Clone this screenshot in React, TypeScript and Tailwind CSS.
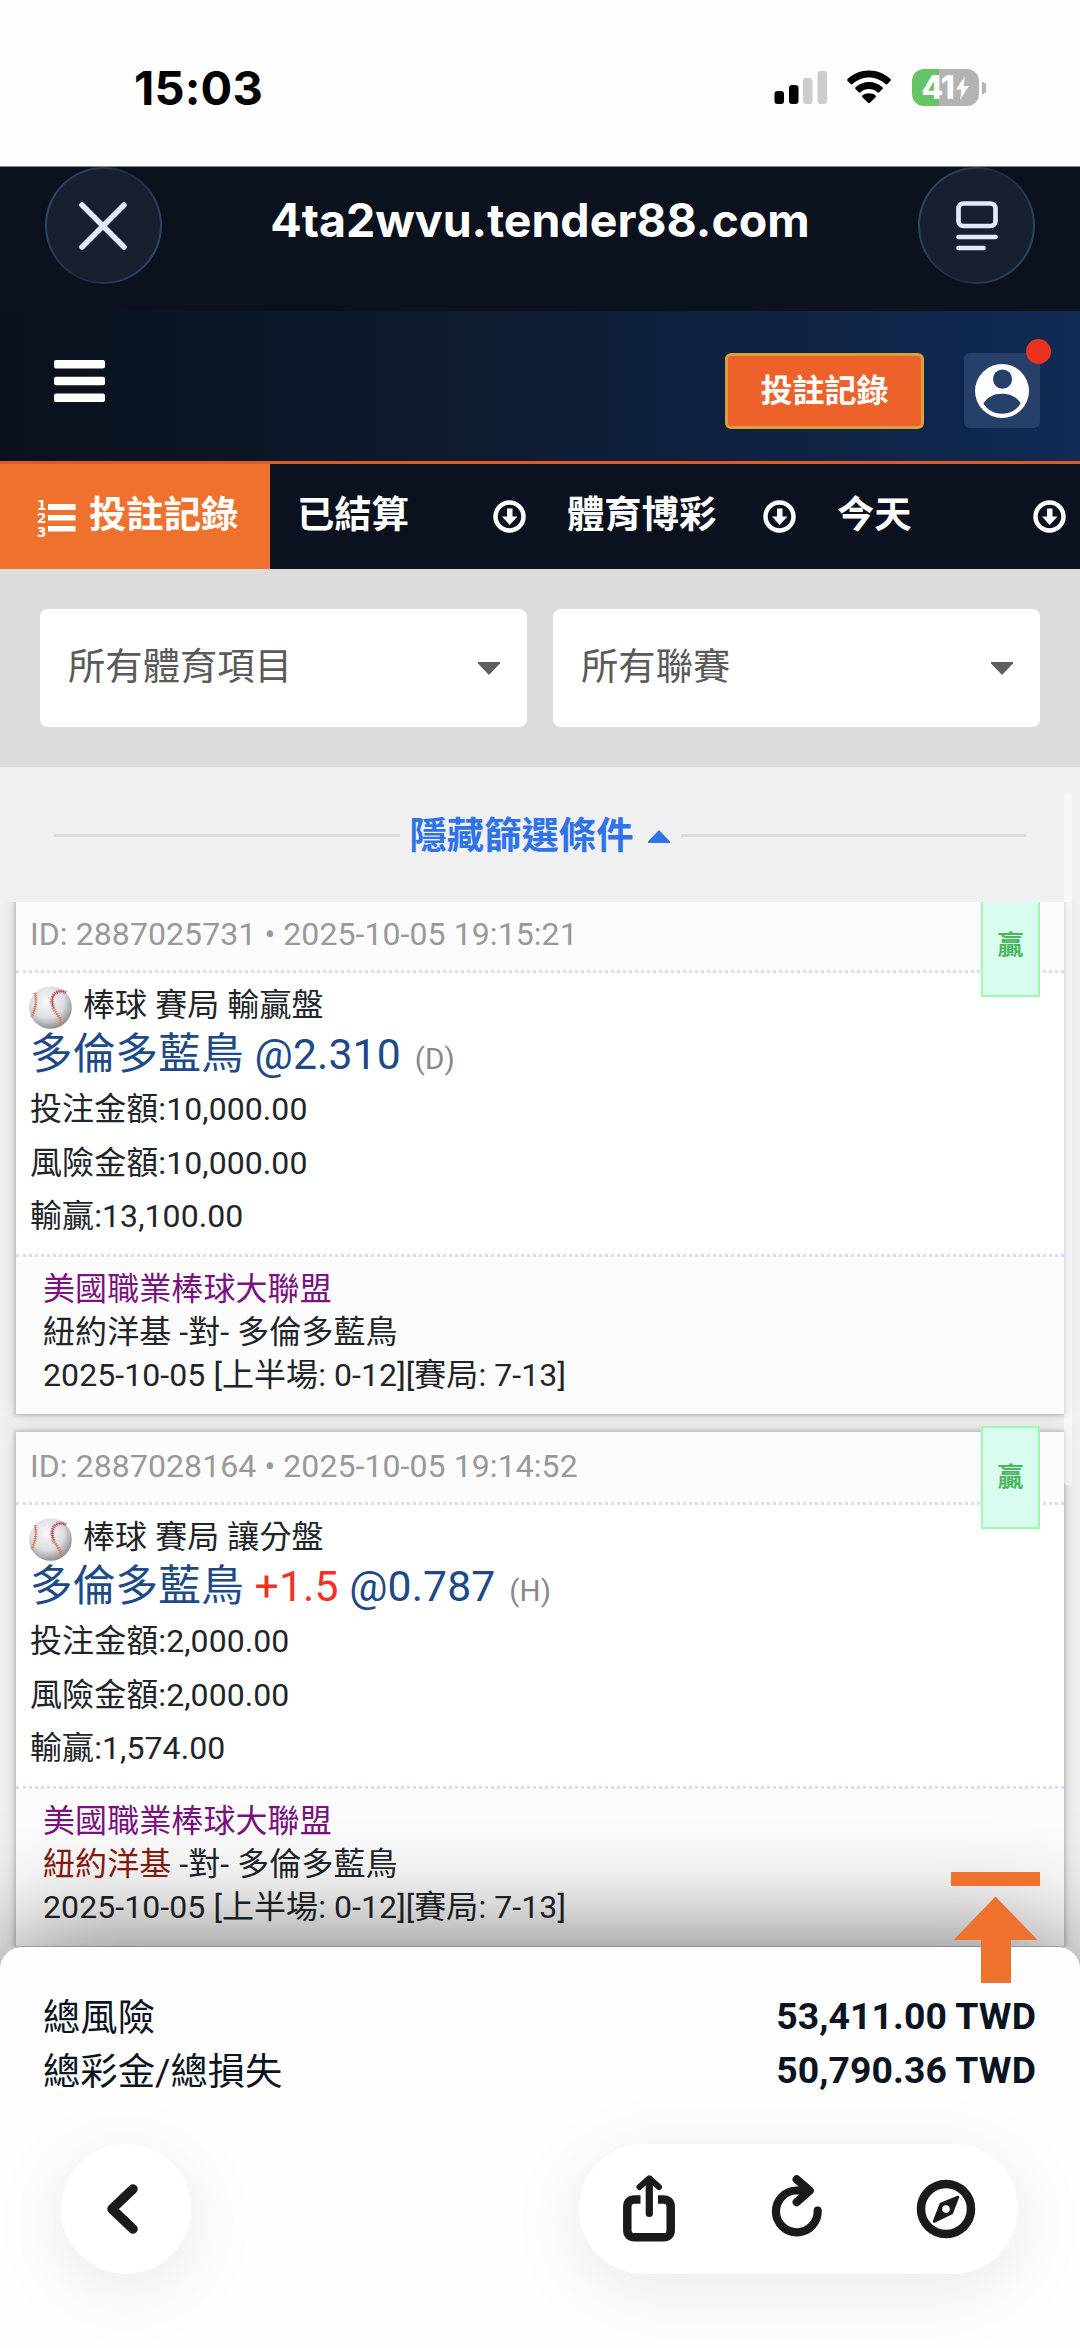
import React from 'react';

const FONT = "font-['Roboto','Noto_Sans_CJK_TC',sans-serif]";

interface Bet {
  id: string;
  time: string;
  market: string;
  pick: string;
  handicap?: string;
  odds: string;
  oddsType: string;
  stake: string;
  risk: string;
  result: string;
  homeFavored?: boolean;
}

const bets: Bet[] = [
  {
    id: '2887025731', time: '2025-10-05 19:15:21', market: '棒球 賽局 輸贏盤', pick: '多倫多藍鳥',
    odds: '@2.310', oddsType: '(D)', stake: '10,000.00', risk: '10,000.00', result: '13,100.00',
  },
  {
    id: '2887028164', time: '2025-10-05 19:14:52', market: '棒球 賽局 讓分盤', pick: '多倫多藍鳥', handicap: '+1.5',
    odds: '@0.787', oddsType: '(H)', stake: '2,000.00', risk: '2,000.00', result: '1,574.00', homeFavored: true,
  },
];

function StatusBar() {
  return (
    <div className="h-[167px] shrink-0 border-b border-[#85888e] bg-[#fefefe] flex items-start justify-between pl-[134px] pr-[94px] pt-[69px]">
      <span className="font-['Inter',sans-serif] text-[47px] font-bold leading-[38px] tracking-[0.2px] text-black">15:03</span>
      <div className="flex items-start">
        <svg width="53" height="36" viewBox="0 0 53 36" className="mr-[19px]">
          <rect x="0.500" y="22" width="9.500" height="13" rx="3" fill="#000" />
          <rect x="15" y="16" width="9.500" height="19" rx="3" fill="#000" />
          <rect x="29" y="9" width="9.500" height="26" rx="3" fill="#ccc" />
          <rect x="43.500" y="2" width="9.500" height="33" rx="3" fill="#ccc" />
        </svg>
        <svg width="46" height="36" viewBox="0 0 46 36" className="mr-5">
          <path d="M23 1.500c8.300 0 15.800 3.200 21.400 8.500.6.600.6 1.400 0 2l-3 3c-.6.600-1.400.6-2 0C35 10.900 29.300 8.500 23 8.500S11 10.900 6.600 15c-.6.600-1.400.6-2 0l-3-3c-.6-.600-.6-1.400 0-2C7.200 4.700 14.700 1.500 23 1.500z" />
          <path d="M23 13c5.200 0 9.900 2 13.400 5.200.6.500.6 1.300 0 1.900l-3.100 3.100c-.6.500-1.300.5-1.900 0-2.200-2-5.200-3.200-8.400-3.200s-6.200 1.200-8.400 3.200c-.6.500-1.300.5-1.900 0l-3.100-3.100c-.6-.600-.6-1.400 0-1.900C13.100 15 17.800 13 23 13z" />
          <path d="M23 24.300c2.500 0 4.800.8 6.600 2.300.6.500.6 1.100 0 1.700L24 33.800c-.6.600-1.400.6-2 0l-5.600-5.500c-.6-.600-.6-1.200 0-1.700 1.800-1.500 4.100-2.300 6.600-2.300z" />
        </svg>
        <div className="flex items-center">
          <div className="w-[67px] h-[37px] rounded-[12px] bg-[linear-gradient(90deg,#65c466_41%,#b3b3b3_41%)] flex items-center justify-center">
            <span className="font-['Inter',sans-serif] text-[32px] font-extrabold leading-none tracking-[-1px] text-white">41</span>
            <svg width="15" height="24" viewBox="0 0 14 24" className="ml-px"><path d="M9.500 0L0.500 13.500h5.500L4.500 24L13.500 10H8z" fill="#fff" /></svg>
          </div>
          <div className="ml-[3px] h-[12px] w-[4px] rounded-r-full bg-[#b3b3b3]" />
        </div>
      </div>
    </div>
  );
}

function BrowserBar() {
  return (
    <div className="h-[144px] shrink-0 bg-[#0b121e] flex items-start justify-between px-[45px]">
      <div className="size-[117px] rounded-full bg-[linear-gradient(115deg,#35496f_5%,#1f2a3f_50%,#31496f_95%)] p-[2px]">
        <div className="size-full rounded-full bg-[#182030] flex items-center justify-center">
          <svg width="48" height="48" viewBox="0 0 48 48" stroke="#e1eafc" strokeWidth="5.500" strokeLinecap="round" className="mr-[2px]"><path d="M3 3l42 42M45 3L3 45" /></svg>
        </div>
      </div>
      <h1 className="mt-[29px] font-['Inter',sans-serif] text-[46.500px] font-bold leading-[48px] text-white">4ta2wvu.tender88.com</h1>
      <div className="size-[117px] rounded-full bg-[linear-gradient(115deg,#35496f_5%,#1f2a3f_50%,#31496f_95%)] p-[2px]">
        <div className="size-full rounded-full bg-[#182030] flex items-center justify-center">
          <svg width="42" height="50" viewBox="0 0 42 50" fill="none" stroke="#e1eafc" strokeWidth="4.700" strokeLinecap="round" className="ml-px">
            <rect x="2.500" y="2.500" width="37" height="22.500" rx="5" />
            <path d="M2.500 36h37M2.500 47h25" />
          </svg>
        </div>
      </div>
    </div>
  );
}

function SiteHeader() {
  return (
    <header className="h-[153px] shrink-0 border-b-[3px] border-[#e2592a] bg-[linear-gradient(90deg,#0a111d_0%,#0d1b30_45%,#102b55_100%)] flex items-start pl-[54px] pr-[40px] pt-[42px]">
      <svg width="51" height="42" viewBox="0 0 51 42" fill="#fff" className="mt-[7px]">
        <rect width="51" height="8.500" rx="2" />
        <rect y="16.800" width="51" height="8.500" rx="2" />
        <rect y="33.500" width="51" height="8.500" rx="2" />
      </svg>
      <button className="ml-auto w-[199px] h-[76px] rounded-[6px] border-[3px] border-[#dba03c] bg-[#ed622b] pb-px text-[32px] font-bold leading-none text-white">投註記錄</button>
      <div className="relative ml-[40px] w-[76px] h-[75px] rounded-[6px] bg-[#264069] flex items-center justify-center">
        <svg width="54" height="54" viewBox="2 2 20 20">
          <circle cx="12" cy="12" r="10" fill="#fff" />
          <circle cx="12.200" cy="7.600" r="3.550" fill="#264069" />
          <path d="M5.100 16.600C6.600 14.200 9 13 12 13s5.600 1.200 6.900 3.600C17.500 19 15 20.400 12 20.400S6.500 19 5.100 16.600z" fill="#264069" />
        </svg>
        <span className="absolute -top-[14px] -right-[11px] size-[25px] rounded-full bg-[#ea3323]" />
      </div>
    </header>
  );
}

function TabSelect({ label }: { label: string }) {
  return (
    <div className="w-[270px] shrink-0 flex items-center justify-between pl-[27px] pr-[14px]">
      <span className="pb-px">{label}</span>
      <svg width="33" height="33" viewBox="0 0 33 33" className="-mt-px">
        <circle cx="16.500" cy="16.500" r="14" fill="none" stroke="#fff" strokeWidth="4.500" />
        <path d="M14 8.500h5.500v8h5L16.700 25L9 16.500h5z" fill="#fff" />
      </svg>
    </div>
  );
}

function TabBar() {
  return (
    <nav className="h-[105px] shrink-0 flex bg-[#0b111e] text-[37.330px] font-bold leading-none text-white">
      <div className="w-[270px] shrink-0 bg-[#ee712d] flex items-center pl-[37px]">
        <svg width="39" height="42" viewBox="0 0 39 42" fill="#fff" className="mr-[13px] mt-[2px]">
          <text x="0" y="12.500" fontSize="13.500" fontWeight="700" fontFamily="DejaVu Sans, sans-serif">1</text>
          <text x="0" y="26" fontSize="13.500" fontWeight="700" fontFamily="DejaVu Sans, sans-serif">2</text>
          <text x="0" y="39.500" fontSize="13.500" fontWeight="700" fontFamily="DejaVu Sans, sans-serif">3</text>
          <rect x="11" y="7" width="27.500" height="6" />
          <rect x="11" y="18" width="27.500" height="5.500" />
          <rect x="11" y="29" width="27.500" height="5.500" />
        </svg>
        <span className="pb-px">投註記錄</span>
      </div>
      <TabSelect label="已結算" />
      <TabSelect label="體育博彩" />
      <TabSelect label="今天" />
    </nav>
  );
}

function FilterSelect({ label }: { label: string }) {
  return (
    <div className="h-[118px] flex-1 rounded-[8px] bg-white flex items-center justify-between pl-[28px] pr-[27px]">
      <span className="pb-px text-[37.330px] leading-none text-[#5a5a5a]">{label}</span>
      <svg width="22" height="13" viewBox="0 0 22 13" fill="#5f5f5f"><path d="M0 0h22v1.500L11 13L0 1.500z" /></svg>
    </div>
  );
}

function Baseball() {
  return (
    <svg width="43" height="43" viewBox="0 0 43 43">
      <defs>
        <radialGradient id="ball" cx="0.420" cy="0.360" r="0.660">
          <stop offset="0" stopColor="#fafafc" />
          <stop offset="0.600" stopColor="#dcdce2" />
          <stop offset="1" stopColor="#8a8a92" />
        </radialGradient>
      </defs>
      <circle cx="21.500" cy="21.500" r="21.300" fill="url(#ball)" />
      <g fill="none" stroke="#dc7d5c">
        <path d="M6 7c2 8 .5 16-3.300 24" strokeWidth="1" />
        <path d="M6 7c2 8 .5 16-3.300 24" strokeWidth="3.200" strokeDasharray="1 1.200" />
        <path d="M24.500 22c2 6 9 10 7 18" strokeWidth="1" />
        <path d="M24.500 22c2 6 9 10 7 18" strokeWidth="3.600" strokeDasharray="1 1.200" />
      </g>
      <g fill="none" stroke="#bd4d50">
        <path d="M37 6.500c-8-4-17.500 2-12.500 15.500" strokeWidth="1" />
        <path d="M37 6.500c-8-4-17.500 2-12.500 15.500" strokeWidth="3.600" strokeDasharray="1 1.200" />
      </g>
    </svg>
  );
}

function BetCard({ bet }: { bet: Bet }) {
  return (
    <article className="relative h-[514px] shrink-0 bg-[#fcfcfc] text-[32px] leading-[43px] tracking-[0.080px] text-[#212529] shadow-[0_0_3px_2px_rgba(0,0,0,0.14),0_0_14px_1px_rgba(0,0,0,0.12)]">
      <div className="h-[73px] border-b-[3px] border-dotted border-[#d5ddfb] pl-[14px] pt-[13px] text-[#999]">
        ID: {bet.id} • {bet.time}
      </div>
      <div className="h-[284px] border-b-[3px] border-dotted border-[#d5ddfb] bg-white pl-[14px] pt-[11px]">
        <div className="flex h-[43px] items-center gap-[11px]">
          <div className="-ml-px mt-[3px]"><Baseball /></div>
          <span>{bet.market}</span>
        </div>
        <div className="h-[57px] whitespace-nowrap text-[42.670px] leading-[55px] tracking-[0.120px] text-[#204a87]">
          {bet.pick} {bet.handicap && <span className="text-[#f03224]">{bet.handicap} </span>}{bet.odds}
          <span className="ml-[14px] text-[29.500px] text-[#888]">{bet.oddsType}</span>
        </div>
        <div className="mt-[-1px] leading-[53.670px]">
          <p>投注金額:{bet.stake}</p>
          <p>風險金額:{bet.risk}</p>
          <p>輸贏:{bet.result}</p>
        </div>
      </div>
      <div className="pl-[27px] pt-[11px]">
        <p className="text-[#7a1280]">美國職業棒球大聯盟</p>
        <p><span className={bet.homeFavored ? 'text-[#8b1a10]' : ''}>紐約洋基</span> -對- 多倫多藍鳥</p>
        <p>2025-10-05 [上半場: 0-12][賽局: 7-13]</p>
      </div>
      <div className="absolute right-[24px] -top-[6px] w-[59px] h-[103px] border-2 border-[#9dfbb0] bg-[#d9fcf0] pt-[31px] text-center text-[26px] leading-[36px] font-bold tracking-normal text-[#4bb65c]">贏</div>
    </article>
  );
}

function BottomSheet() {
  return (
    <footer className="relative h-[401px] shrink-0 rounded-t-[22px] bg-[#fefefe] shadow-[0_0_120px_rgba(0,0,0,0.600)]">
      <div className="pl-[43px] pr-[44px] pt-[42px] text-[37.330px] leading-[54px] text-[#0b1423]">
        <div className="flex justify-between"><span className="pt-[2px] -mb-[2px]">總風險</span><span className="font-bold tracking-[0.1px]">53,411.00 TWD</span></div>
        <div className="flex justify-between"><span className="pt-[2px] -mb-[2px]">總彩金/總損失</span><span className="font-bold tracking-[0.1px]">50,790.36 TWD</span></div>
      </div>
      <svg width="89" height="111" viewBox="0 0 89 111" fill="#ee712d" className="absolute -top-[75px] right-[40px]">
        <path d="M0 0h89v14H0zM44.500 24.500L86.500 68H60v43H30V68H2.500z" />
      </svg>
      <div className="mt-[47px] flex justify-between pl-[61px] pr-[62px]">
        <div className="size-[130px] rounded-full bg-white shadow-[0_14px_80px_rgba(0,0,0,0.085)] flex items-center justify-center">
          <svg width="34" height="52" viewBox="0 0 34 52" fill="none" stroke="#1a1a1a" strokeWidth="9.500" strokeLinecap="round" strokeLinejoin="round" className="mr-[8px]"><path d="M28 6L7 26l21 20" /></svg>
        </div>
        <div className="w-[439px] h-[130px] rounded-full bg-white shadow-[0_14px_80px_rgba(0,0,0,0.085)] flex items-start pl-[44px] pt-[31px]">
          <svg width="52" height="67" viewBox="0 0 52 67" fill="none" stroke="#1a1a1a" strokeLinecap="round" strokeLinejoin="round">
            <path d="M17.500 24.500h-5.700q-7.500 0-7.500 7.500v23q0 7.300 7.500 7.300h28.400q7.500 0 7.500-7.300V32q0-7.500-7.500-7.500h-5.200" strokeWidth="8.500" strokeLinecap="butt" />
            <path d="M26.300 5v33.500" strokeWidth="7.200" />
            <path d="M16.500 12L26.300 3.300L36 12" strokeWidth="6" />
          </svg>
          <svg width="52" height="64" viewBox="0 0 52 64" fill="none" stroke="#1a1a1a" strokeWidth="8.200" strokeLinecap="round" strokeLinejoin="round" className="ml-[96px]">
            <path d="M46.700 35.500A20.900 20.900 0 1 1 25.700 15.500h11" />
            <path d="M25.700 4.300l13 11.400l-13 11.400" />
          </svg>
          <svg width="60" height="60" viewBox="0 0 60 60" fill="none" stroke="#1a1a1a" strokeWidth="8.500" className="ml-[93px] mt-[4px]">
            <circle cx="30" cy="30" r="25" />
            <path d="M42 18L35.800 34L18 42.500L24.800 25z" fill="#1a1a1a" strokeWidth="2.500" strokeLinejoin="round" />
            <circle cx="30" cy="30" r="3.800" fill="#fff" stroke="none" />
          </svg>
        </div>
      </div>
    </footer>
  );
}

export default function App() {
  return (
    <div className={`w-[1080px] h-[2348px] overflow-hidden bg-[#f0f0f0] flex flex-col ${FONT}`}>
      <StatusBar />
      <BrowserBar />
      <SiteHeader />
      <TabBar />
      <div className="h-[198px] shrink-0 bg-[#dcdcdc] flex gap-[26px] px-[40px] pt-[40px]">
        <FilterSelect label="所有體育項目" />
        <FilterSelect label="所有聯賽" />
      </div>
      <div className="relative h-[135px] shrink-0 flex items-center px-[54px]">
        <div className="mt-px h-[3px] flex-1 bg-[#dcdcdc]" />
        <span className="ml-[10px] pt-[4px] text-[37.330px] font-bold leading-none text-[#2f73e8]">隱藏篩選條件</span>
        <svg width="22" height="13" viewBox="0 0 22 13" fill="#2f73e8" className="ml-[14px] mr-[11px] mt-[4px]"><path d="M0 13h22v-1.500L11 0L0 11.500z" /></svg>
        <div className="mt-px h-[3px] flex-1 bg-[#dcdcdc]" />
        {/* scroll thumb */}
        <div className="absolute right-[8px] top-[25px] z-10 h-[693px] w-[8px] rounded-full bg-white/50" />
      </div>
      <main className="h-[1045px] shrink-0 overflow-hidden pl-[16px] pr-[16px]">
        <div className="-mt-[2px] flex flex-col gap-[18px]">
          {bets.map((bet) => (
            <BetCard key={bet.id} bet={bet} />
          ))}
        </div>
      </main>
      <BottomSheet />
    </div>
  );
}
